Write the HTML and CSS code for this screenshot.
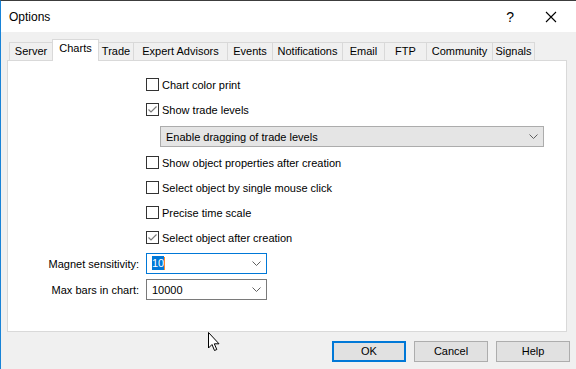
FILE: index.html
```
<!DOCTYPE html>
<html lang="en">
<head>
  <meta charset="utf-8">
  <title>Options</title>
  <link rel="stylesheet" href="styles.css">
</head>
<body>
  <div class="window">
    <div class="titlebar">
      <span class="title">Options</span>
      <span class="helpMark">?</span>
      <svg class="close" width="12" height="12" viewBox="0 0 12 12">
        <path d="M1 1 L11 11 M11 1 L1 11" stroke="#000" stroke-width="1.1" fill="none"/>
      </svg>
    </div>

    <div class="content">
      <div class="tabs">
        <div class="tab">Server</div>
        <div class="tab active">Charts</div>
        <div class="tab">Trade</div>
        <div class="tab">Expert Advisors</div>
        <div class="tab">Events</div>
        <div class="tab">Notifications</div>
        <div class="tab">Email</div>
        <div class="tab">FTP</div>
        <div class="tab">Community</div>
        <div class="tab last">Signals</div>
      </div>

      <div class="panel">
        <div class="checks">
          <div class="check"><span class="box"></span>Chart color print</div>
          <div class="check"><span class="box checked"><svg width="11" height="11" viewBox="0 0 11 11"><path d="M1.5 5.5 L4 8 L9.5 2.5" stroke="#7a7a7a" stroke-width="1.2" fill="none"/></svg></span>Show trade levels</div>
          <div class="select">
            <span>Enable dragging of trade levels</span>
            <svg class="chevron" width="9" height="5" viewBox="0 0 9 5"><path d="M0.5 0.5 L4.5 4.5 L8.5 0.5" stroke="#606060" fill="none"/></svg>
          </div>
          <div class="check"><span class="box"></span>Show object properties after creation</div>
          <div class="check"><span class="box"></span>Select object by single mouse click</div>
          <div class="check"><span class="box"></span>Precise time scale</div>
          <div class="check"><span class="box checked"><svg width="11" height="11" viewBox="0 0 11 11"><path d="M1.5 5.5 L4 8 L9.5 2.5" stroke="#7a7a7a" stroke-width="1.2" fill="none"/></svg></span>Select object after creation</div>
        </div>

        <div class="fields">
          <label class="fieldLabel">Magnet sensitivity:</label>
          <div class="combo focused">
            <span><span class="selected">10</span><span class="caret"></span></span>
            <svg class="chevron" width="9" height="5" viewBox="0 0 9 5"><path d="M0.5 0.5 L4.5 4.5 L8.5 0.5" stroke="#606060" fill="none"/></svg>
          </div>
          <label class="fieldLabel">Max bars in chart:</label>
          <div class="combo">
            <span>10000</span>
            <svg class="chevron" width="9" height="5" viewBox="0 0 9 5"><path d="M0.5 0.5 L4.5 4.5 L8.5 0.5" stroke="#606060" fill="none"/></svg>
          </div>
        </div>
      </div>

      <div class="buttons">
        <div class="button default">OK</div>
        <div class="button">Cancel</div>
        <div class="button">Help</div>
      </div>
    </div>

    <svg class="cursor" width="13" height="20" viewBox="0 0 13 20">
      <path d="M0.5 0.5 L0.5 16 L4 12.5 L6.5 18.5 L8.8 17.5 L6.3 11.8 L11 11.8 Z" fill="#fff" stroke="#000" stroke-width="1"/>
    </svg>
  </div>
</body>
</html>
```

FILE: styles.css
```
body {
  margin: 0;
  padding: 0;
  font-family: 'Liberation Sans', Arial, sans-serif;
  font-size: 11px;
  color: #000;
}

.window {
  position: relative;
  width: 576px;
  height: 369px;
  box-sizing: border-box;
  background-color: #f0f0f0;
  border-top: 1px solid #3c3c3c;
  border-left: 1px solid #1883d7;
  overflow: hidden;
}

.titlebar {
  display: flex;
  align-items: center;
  height: 31px;
  background-color: #fff;
  padding-left: 8px;
}

.title {
  font-size: 12px;
  flex: 1;
  padding-top: 1px;
}

.helpMark {
  font-size: 14px;
  margin-right: 31px;
}

.close {
  margin-right: 19px;
}

.content {
  padding-top: 7px;
}

.tabs {
  display: grid;
  grid-template-columns: 43px 46px 35px 94px 45px 70px 42px 42px 66px 43px;
  align-items: end;
  height: 21px;
  margin-left: 8px;
}

.tab {
  height: 18px;
  box-sizing: border-box;
  border: 1px solid #d9d9d9;
  border-right: none;
  border-bottom: none;
  background-color: #f0f0f0;
  text-align: center;
  line-height: 17px;
  white-space: nowrap;
}

.tab.last {
  border-right: 1px solid #d9d9d9;
}

.tab.active {
  position: relative;
  z-index: 1;
  height: 22px;
  margin-bottom: -1px;
  margin-right: -1px;
  border-right: 1px solid #d9d9d9;
  background-color: #fff;
  line-height: 17px;
}

.panel {
  width: 560px;
  height: 272px;
  box-sizing: border-box;
  margin-left: 6px;
  border: 1px solid #d9d9d9;
  background-color: #fff;
}

.checks {
  padding-top: 11px;
  padding-left: 138px;
}

.check {
  display: flex;
  align-items: center;
  gap: 3px;
  height: 25px;
}

.box {
  display: flex;
  align-items: center;
  justify-content: center;
  width: 13px;
  height: 13px;
  box-sizing: border-box;
  border: 1px solid #333;
  background-color: #fff;
}

.select {
  display: flex;
  align-items: center;
  justify-content: space-between;
  width: 384px;
  height: 21px;
  box-sizing: border-box;
  margin: 4px 0 3px 14px;
  padding: 0 5px 0 5px;
  border: 1px solid #acacac;
  background-color: #e5e5e5;
}

.fields {
  display: grid;
  grid-template-columns: 132px 121px;
  column-gap: 6px;
  row-gap: 5px;
  margin-top: 3px;
}

.fieldLabel {
  text-align: right;
  align-self: center;
  padding-right: 1px;
}

.combo {
  display: flex;
  align-items: center;
  justify-content: space-between;
  height: 21px;
  box-sizing: border-box;
  padding: 0 5px 0 5px;
  border: 1px solid #7a7a7a;
  background-color: #fff;
}

.combo.focused {
  border-color: #0078d7;
}

.selected {
  background-color: #0078d7;
  color: #fff;
  padding: 1px 0;
}

.caret {
  display: inline-block;
  width: 1px;
  height: 13px;
  background-color: #ff8828;
  vertical-align: middle;
}

.buttons {
  display: flex;
  justify-content: flex-end;
  gap: 8px;
  margin-top: 9px;
  padding-right: 6px;
}

.button {
  width: 74px;
  height: 21px;
  box-sizing: border-box;
  border: 1px solid #adadad;
  background-color: #e1e1e1;
  text-align: center;
  line-height: 19px;
}

.button.default {
  border: 2px solid #0078d7;
  line-height: 17px;
}

.cursor {
  position: absolute;
  left: 207px;
  top: 331px;
}
```
